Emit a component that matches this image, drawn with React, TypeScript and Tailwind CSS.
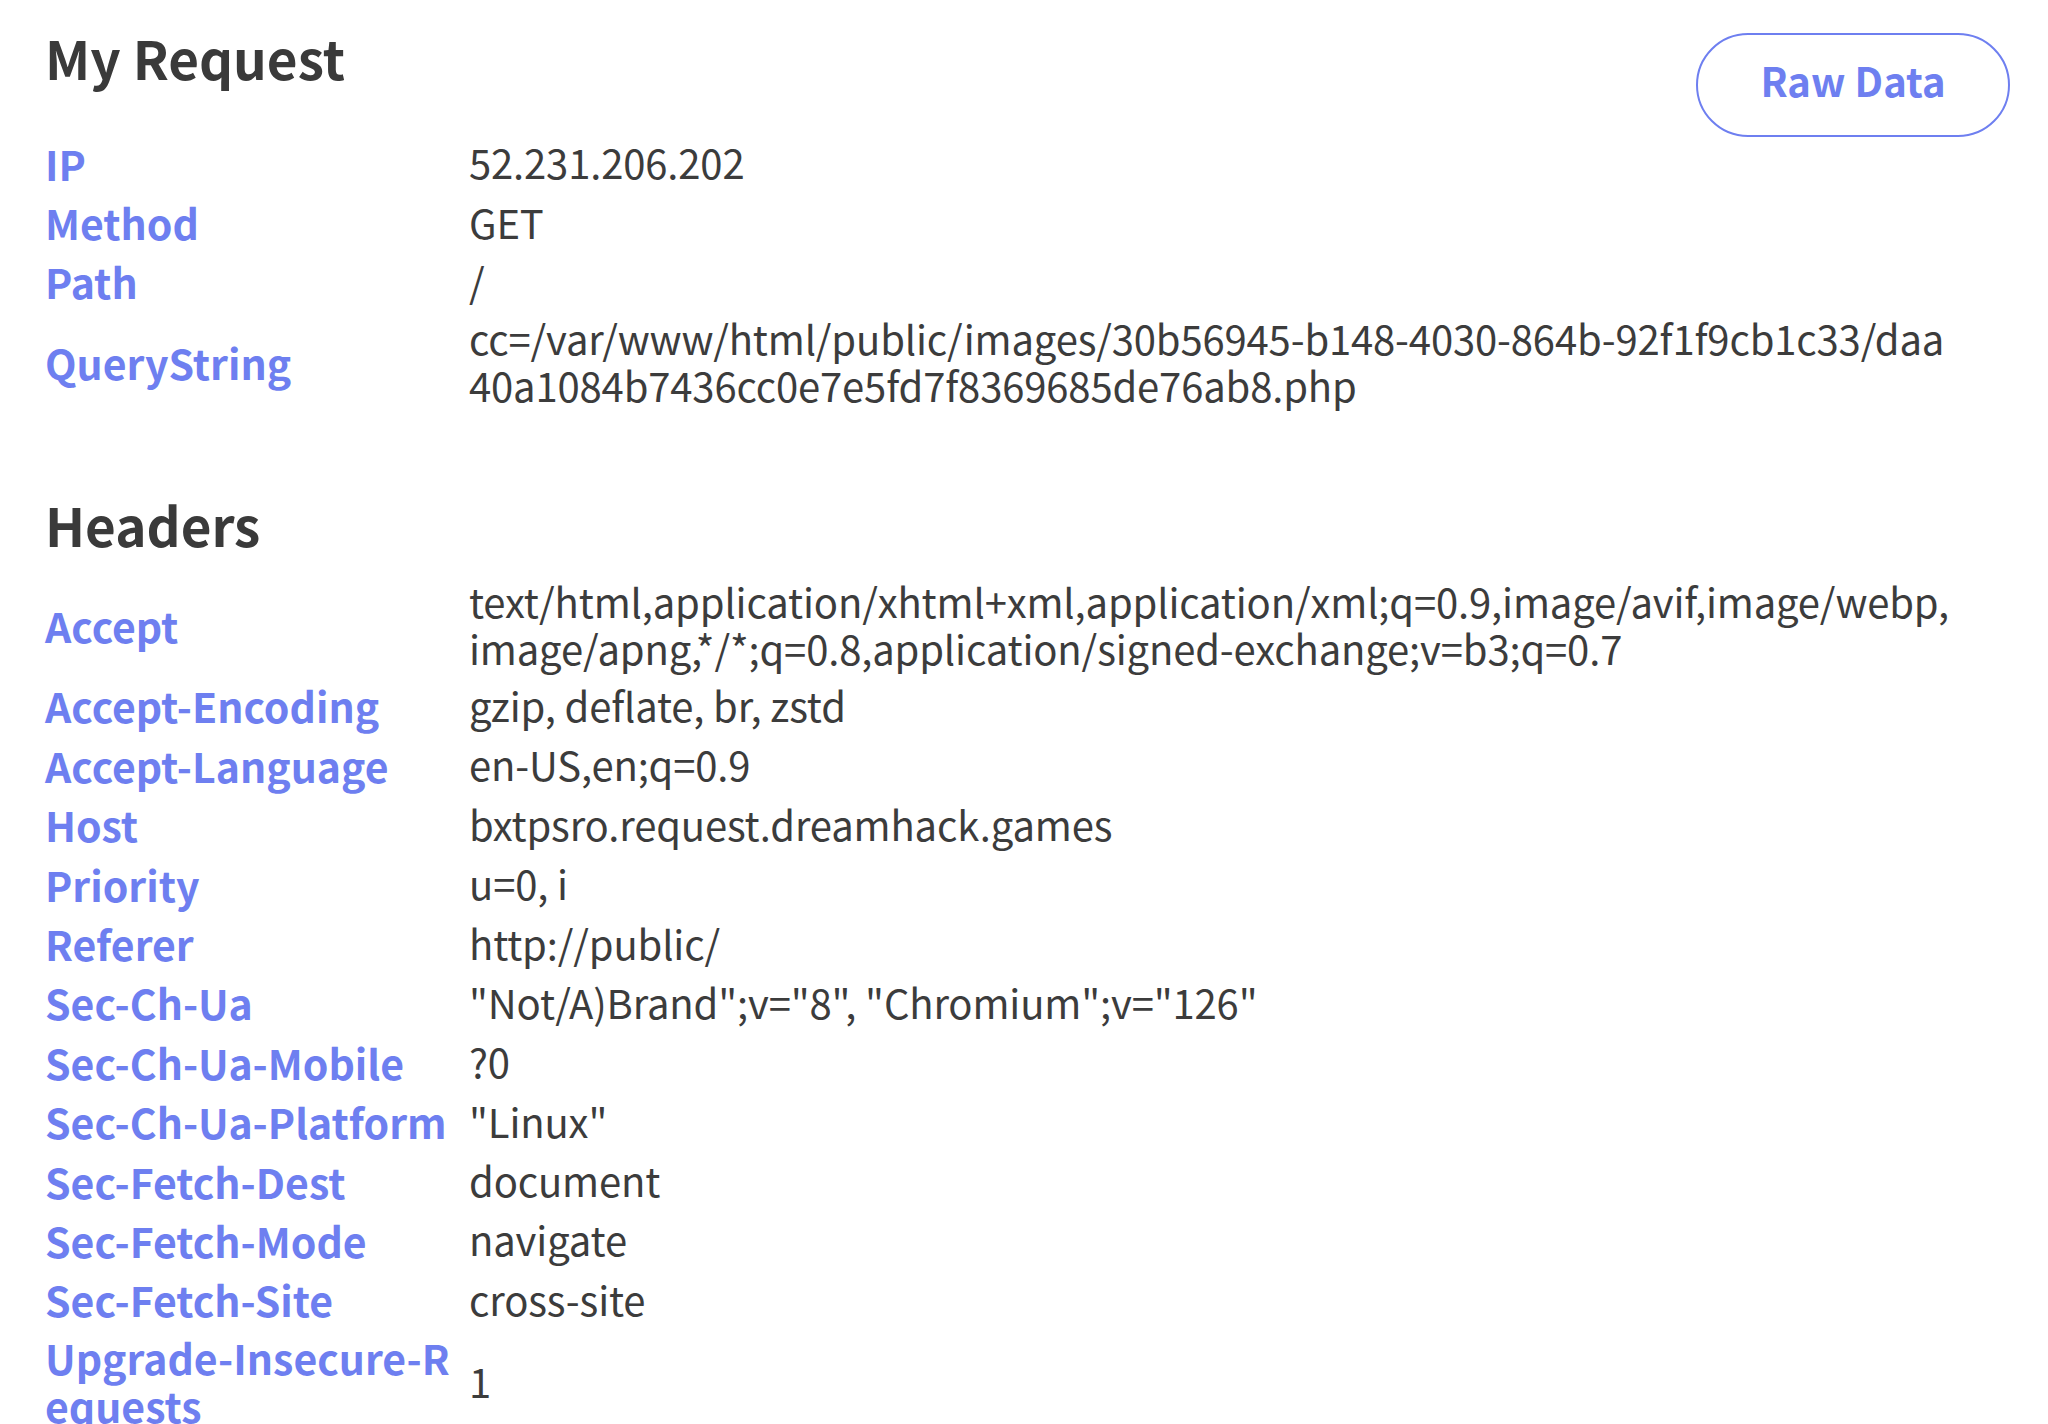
const requestRows: [string, string][] = [
  ["IP", "52.231.206.202"],
  ["Method", "GET"],
  ["Path", "/"],
  [
    "QueryString",
    "cc=/var/www/html/public/images/30b56945-b148-4030-864b-92f1f9cb1c33/daa40a1084b7436cc0e7e5fd7f8369685de76ab8.php",
  ],
];

const headerRows: [string, string][] = [
  [
    "Accept",
    "text/html,application/xhtml+xml,application/xml;q=0.9,image/avif,image/webp,image/apng,*/*;q=0.8,application/signed-exchange;v=b3;q=0.7",
  ],
  ["Accept-Encoding", "gzip, deflate, br, zstd"],
  ["Accept-Language", "en-US,en;q=0.9"],
  ["Host", "bxtpsro.request.dreamhack.games"],
  ["Priority", "u=0, i"],
  ["Referer", "http://public/"],
  ["Sec-Ch-Ua", '"Not/A)Brand";v="8", "Chromium";v="126"'],
  ["Sec-Ch-Ua-Mobile", "?0"],
  ["Sec-Ch-Ua-Platform", '"Linux"'],
  ["Sec-Fetch-Dest", "document"],
  ["Sec-Fetch-Mode", "navigate"],
  ["Sec-Fetch-Site", "cross-site"],
  ["Upgrade-Insecure-Requests", "1"],
];

function InfoTable({ rows }: { rows: [string, string][] }) {
  return (
    <div className="flex flex-col">
      {rows.map(([key, value]) => (
        <div key={key} className="grid min-h-[59.4px] grid-cols-[424px_1fr] items-center py-[4px]">
          <div className="pr-[16px] break-all text-[41px] leading-[48px] font-bold text-[#6e7ff0]">{key}</div>
          <div className="pr-[51px] break-all text-[40px] leading-[47px] tracking-[-0.15px] text-[#3c3c3c]">
            {value}
          </div>
        </div>
      ))}
    </div>
  );
}

export default function App() {
  return (
    <div className="min-h-screen bg-white pl-[45px] pr-[38px] pt-[26px] font-['Noto_Sans_CJK_KR','Noto_Sans',sans-serif]">
      {/* My Request */}
      <div className="flex items-start justify-between">
        <h2 className="text-[53px] font-bold leading-[1.2] text-[#3a3a3a]">My Request</h2>
        <button className="mt-[7px] h-[104px] w-[314px] rounded-full border-2 border-[#6e7ff0] pb-[10px] text-[40px] font-bold text-[#6e7ff0]">
          Raw Data
        </button>
      </div>
      <div className="-mt-[4px]">
        <InfoTable rows={requestRows} />
      </div>

      {/* Headers */}
      <h2 className="mt-[80px] mb-[17px] text-[53px] font-bold leading-[1.2] text-[#3a3a3a]">Headers</h2>
      <InfoTable rows={headerRows} />
    </div>
  );
}
